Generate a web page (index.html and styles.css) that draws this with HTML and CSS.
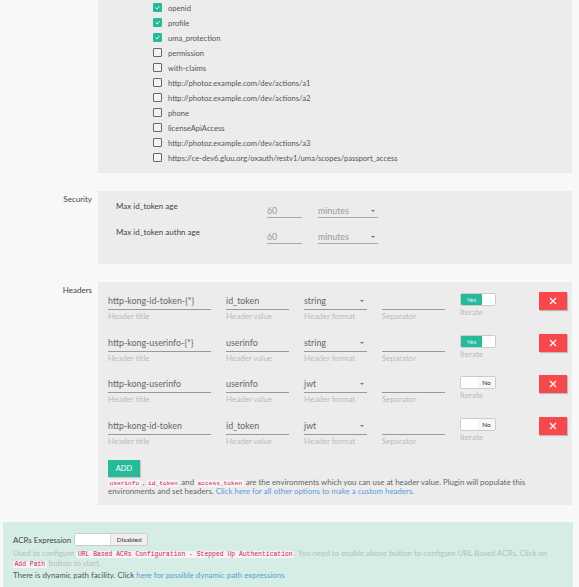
FILE: index.html
```html
<!DOCTYPE html>
<html>
<head>
<meta charset="utf-8">
<link rel="stylesheet" href="styles.css">
</head>
<body>
<div class="page">
  <div class="form-row">
    <div class="row-label"></div>
    <div class="panel scopes">
      <label class="scope"><span class="cb on"><svg viewBox="0 0 9 9"><polyline points="2,4.6 3.9,6.4 7,2.8"/></svg></span>openid</label>
      <label class="scope"><span class="cb on"><svg viewBox="0 0 9 9"><polyline points="2,4.6 3.9,6.4 7,2.8"/></svg></span>profile</label>
      <label class="scope"><span class="cb on"><svg viewBox="0 0 9 9"><polyline points="2,4.6 3.9,6.4 7,2.8"/></svg></span>uma_protection</label>
      <label class="scope"><span class="cb"></span>permission</label>
      <label class="scope"><span class="cb"></span>with-claims</label>
      <label class="scope"><span class="cb"></span>http://photoz.example.com/dev/actions/a1</label>
      <label class="scope"><span class="cb"></span>http://photoz.example.com/dev/actions/a2</label>
      <label class="scope"><span class="cb"></span>phone</label>
      <label class="scope"><span class="cb"></span>licenseApiAccess</label>
      <label class="scope"><span class="cb"></span>http://photoz.example.com/dev/actions/a3</label>
      <label class="scope"><span class="cb"></span>https://ce-dev6.gluu.org/oxauth/restv1/uma/scopes/passport_access</label>
    </div>
  </div>

  <div class="form-row">
    <div class="row-label">Security</div>
    <div class="panel security">
      <div class="sec-row">
        <div class="sec-label">Max id_token age</div>
        <div class="line-input num">60</div>
        <div class="line-input sel">minutes<span class="caret"></span></div>
      </div>
      <div class="sec-row">
        <div class="sec-label">Max id_token authn age</div>
        <div class="line-input num">60</div>
        <div class="line-input sel">minutes<span class="caret"></span></div>
      </div>
    </div>
  </div>

  <div class="form-row">
    <div class="row-label">Headers</div>
    <div class="panel headers">
      <div class="hrow">
        <div class="field f-title"><div class="hinput">http-kong-id-token-{*}</div><div class="help">Header title</div></div>
        <div class="field f-val"><div class="hinput">id_token</div><div class="help">Header value</div></div>
        <div class="field f-fmt"><div class="hinput">string<span class="caret"></span></div><div class="help">Header format</div></div>
        <div class="field f-sep"><div class="hinput"></div><div class="help">Separator</div></div>
        <div class="field f-iter"><div class="toggle yes"><span class="t-on">Yes</span><span class="t-off"></span></div><div class="help">Iterate</div></div>
        <button class="del"><svg viewBox="0 0 8 8"><path d="M1 1L7 7M7 1L1 7"/></svg></button>
      </div>
      <div class="hrow">
        <div class="field f-title"><div class="hinput">http-kong-userinfo-{*}</div><div class="help">Header title</div></div>
        <div class="field f-val"><div class="hinput">userinfo</div><div class="help">Header value</div></div>
        <div class="field f-fmt"><div class="hinput">string<span class="caret"></span></div><div class="help">Header format</div></div>
        <div class="field f-sep"><div class="hinput"></div><div class="help">Separator</div></div>
        <div class="field f-iter"><div class="toggle yes"><span class="t-on">Yes</span><span class="t-off"></span></div><div class="help">Iterate</div></div>
        <button class="del"><svg viewBox="0 0 8 8"><path d="M1 1L7 7M7 1L1 7"/></svg></button>
      </div>
      <div class="hrow">
        <div class="field f-title"><div class="hinput">http-kong-userinfo</div><div class="help">Header title</div></div>
        <div class="field f-val"><div class="hinput">userinfo</div><div class="help">Header value</div></div>
        <div class="field f-fmt"><div class="hinput">jwt<span class="caret"></span></div><div class="help">Header format</div></div>
        <div class="field f-sep"><div class="hinput"></div><div class="help">Separator</div></div>
        <div class="field f-iter"><div class="toggle no"><span class="t-blank"></span><span class="t-no">No</span></div><div class="help">Iterate</div></div>
        <button class="del"><svg viewBox="0 0 8 8"><path d="M1 1L7 7M7 1L1 7"/></svg></button>
      </div>
      <div class="hrow">
        <div class="field f-title"><div class="hinput">http-kong-id-token</div><div class="help">Header title</div></div>
        <div class="field f-val"><div class="hinput">id_token</div><div class="help">Header value</div></div>
        <div class="field f-fmt"><div class="hinput">jwt<span class="caret"></span></div><div class="help">Header format</div></div>
        <div class="field f-sep"><div class="hinput"></div><div class="help">Separator</div></div>
        <div class="field f-iter"><div class="toggle no"><span class="t-blank"></span><span class="t-no">No</span></div><div class="help">Iterate</div></div>
        <button class="del"><svg viewBox="0 0 8 8"><path d="M1 1L7 7M7 1L1 7"/></svg></button>
      </div>
      <button class="add">ADD</button>
      <p class="note"><code>userinfo</code> , <code>id_token</code> and <code>access_token</code> are the environments which you can use at header value. Plugin will populate this environments and set headers. <a href="#">Click here for all other options to make a custom headers.</a></p>
    </div>
  </div>

  <div class="acr">
    <div class="acr-head">
      <span class="acr-label">ACRs Expression</span>
      <div class="toggle wide"><span class="t-blank"></span><span class="t-dis">Disabled</span></div>
    </div>
    <p class="acr-help">Used to configure <code>URL Based ACRs Configuration - Stepped Up Authentication</code>. You need to enable above button to configure URL Based ACRs. Click on <code>Add Path</code> button to start.</p>
    <p class="acr-dyn">There is dynamic path facility. Click <a href="#">here for possible dynamic path expressions</a></p>
  </div>
</div>
</body>
</html>
```

FILE: styles.css
```css
* { box-sizing: border-box; }
html, body { margin: 0; padding: 0; }
body {
  background: #f8f8f8;
  font-family: Lato, "Open Sans", sans-serif;
  font-size: 8px;
  color: #555;
}
.page {
  width: 570px;
  margin-left: 3px;
}
.form-row {
  display: flex;
  margin-bottom: 18px;
}
.row-label {
  width: 95px;
  flex: none;
  text-align: right;
  padding-right: 6px;
  padding-top: 2px;
  line-height: 12px;
  color: #444;
}
.panel {
  background: #ececec;
  width: 474px;
}
/* scopes */
.scopes {
  padding: 0 0 8px 55px;
  font-size: 7.6px;
}
.scope {
  display: flex;
  align-items: center;
  height: 15px;
  gap: 6px;
  color: #555;
}
.cb {
  width: 9px;
  height: 9px;
  border: 1px solid #666;
  border-radius: 1px;
  background: #f4f4f4;
  flex: none;
  display: flex;
}
.cb.on {
  background: #26b99a;
  border-color: #26b99a;
}
.cb svg { width: 7px; height: 7px; }
.cb polyline { fill: none; stroke: #fff; stroke-width: 1.2; }

/* security */
.security {
  padding: 8px 0 20px 18px;
}
.sec-row {
  display: flex;
  align-items: flex-start;
  margin-bottom: 7px;
}
.sec-row:last-child { margin-bottom: 0; }
.sec-label {
  width: 151px;
  padding-top: 1px;
  line-height: 12px;
  color: #444;
}
.line-input {
  position: relative;
  height: 19px;
  padding-top: 6px;
  line-height: 12px;
  border-bottom: 1px solid #aaa;
  color: #999;
  font-size: 8.8px;
}
.num { width: 35px; margin-right: 16px; }
.sel { width: 60px; }
.caret {
  position: absolute;
  right: 3px;
  top: 11px;
  border-left: 2.5px solid transparent;
  border-right: 2.5px solid transparent;
  border-top: 2.5px solid #777;
}

/* headers */
.headers {
  padding: 10px 0 9px 10px;
}
.hrow {
  display: flex;
  align-items: flex-start;
  height: 41.5px;
}
.field { margin-right: 15px; }
.f-title { width: 103px; }
.f-val, .f-fmt, .f-sep { width: 63px; }
.f-iter { width: 79px; margin-right: 0; }
.hinput {
  position: relative;
  height: 18px;
  padding-top: 3px;
  line-height: 12px;
  border-bottom: 1px solid #999;
  color: #666;
  font-size: 8.9px;
}
.f-fmt .caret { top: 8px; }
.help {
  line-height: 12px;
  color: #bbb;
}
.toggle {
  display: flex;
  width: 36px;
  height: 13px;
  margin-top: 1px;
  border: 1px solid #ccc;
  border-radius: 2px;
  background: #fff;
  overflow: hidden;
  font-size: 6.5px;
  line-height: 11px;
}
.t-on {
  width: 21px;
  background: #26b99a;
  color: #d8f5ee;
  text-align: center;
}
.t-off { flex: 1; background: #fff; }
.t-blank { width: 17px; background: #fff; }
.t-no {
  flex: 1;
  background: #f6f6f6;
  color: #333;
  text-align: center;
}
.del {
  width: 28px;
  height: 18px;
  border: none;
  padding: 0;
  background: #f7484e;
  box-shadow: 1px 1px 1px rgba(0,0,0,0.2);
  display: flex;
  align-items: center;
  justify-content: center;
}
.del svg { width: 8px; height: 8px; }
.del path { stroke: #fff; stroke-width: 1.1; fill: none; }
.add {
  display: block;
  margin-top: 2px;
  width: 32px;
  height: 17px;
  border: none;
  padding: 0;
  background: #26b99a;
  color: #fff;
  font-family: Lato, "Open Sans", sans-serif;
  font-size: 7.5px;
  box-shadow: 1px 1px 1px rgba(0,0,0,0.15);
}
.note {
  margin: 1px 0 0;
  line-height: 9px;
  font-size: 7.9px;
  color: #666;
  padding-right: 6px;
}
code {
  font-family: "Liberation Mono", "DejaVu Sans Mono", monospace;
  font-size: 6.2px;
  line-height: 1;
  white-space: nowrap;
  color: #c7254e;
  background: #f9f2f4;
  padding: 0 1.5px;
  border-radius: 2px;
}
a { color: #5b9bd5; text-decoration: none; }

/* acr */
.acr {
  background: #d6ede6;
  padding: 11px 10px 10px 10px;
  margin-top: -1px;
  font-size: 7.9px;
}
.acr-head {
  display: flex;
  align-items: center;
  gap: 3px;
}
.acr-label { color: #444; }
.toggle.wide {
  width: 74px;
  margin-top: 0;
}
.toggle.wide .t-blank { width: 35px; }
.t-dis {
  flex: 1;
  background: #efefef;
  color: #333;
  text-align: center;
  border-left: 1px solid #ddd;
}
.acr-help {
  margin: 3px 0 0;
  line-height: 9px;
  color: #bbb;
}
.acr-help code { font-size: 6.4px; }
.acr-dyn {
  margin: 3px 0 0;
  line-height: 9px;
  color: #555;
}
```
